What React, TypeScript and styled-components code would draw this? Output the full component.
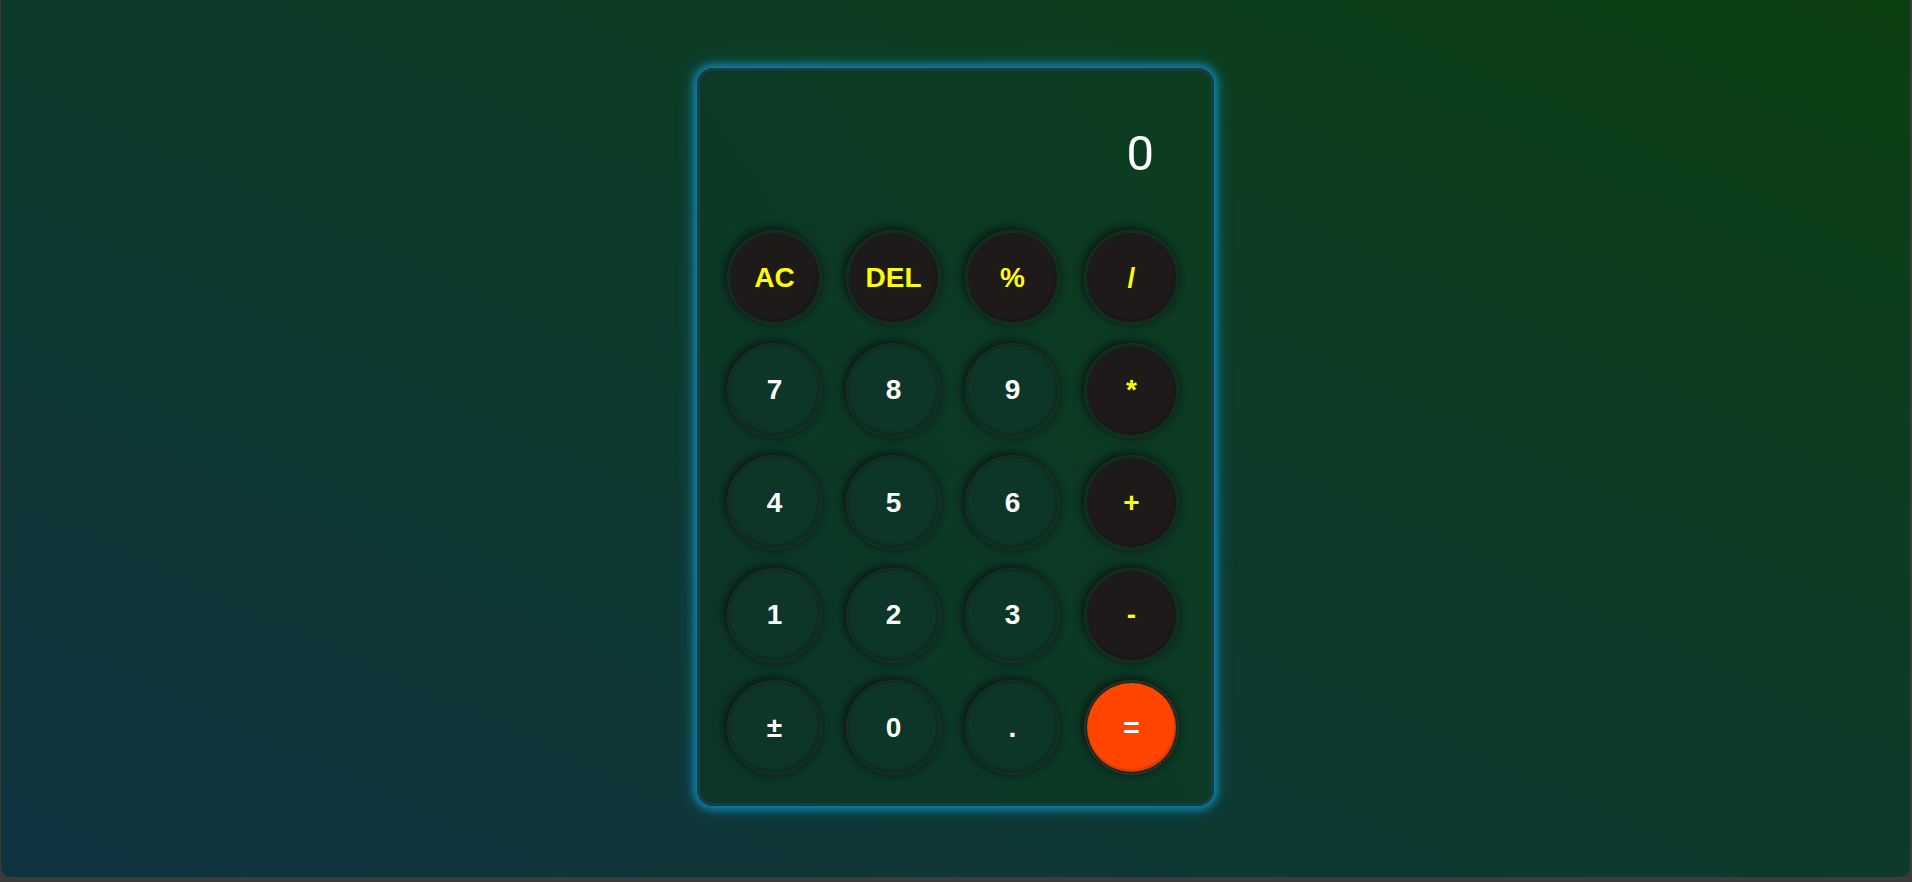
import React from "react";
import styled, { createGlobalStyle } from "styled-components";

const Global = createGlobalStyle`
  html, body { margin: 0; padding: 0; }
  body {
    background: #3b3b3b;
    font-family: "Liberation Sans", Arial, sans-serif;
  }
  * { box-sizing: border-box; }
`;

const Page = styled.div`
  margin: 0 2px 0 1px;
  height: 877px;
  padding-bottom: 3px;
  border-radius: 0 0 9px 9px;
  background: linear-gradient(to top right, #0f3441 0%, #0d3a2c 50%, #0b4012 100%);
  display: flex;
  align-items: center;
  justify-content: center;
  overflow: hidden;
`;

const Card = styled.div`
  width: 517px;
  height: 738px;
  border: 3px solid #183c48;
  border-radius: 16px;
  background: linear-gradient(to top right, #0d352a 0%, #0c3a25 50%, #0c3d1f 100%);
  box-shadow: 0 0 8px 3px #1189ae, 0 0 16px 4px rgba(14, 120, 160, 0.45);
  padding: 28px 32px 28px 27px;
  display: flex;
  flex-direction: column;
`;

const Display = styled.div`
  height: 131px;
  padding: 31px 25px 0 0;
  text-align: right;
  font-family: Roboto, "Liberation Sans", sans-serif;
  font-weight: 400;
  font-size: 49px;
  line-height: 48px;
  color: #ffffff;
`;

const Keys = styled.div`
  display: grid;
  grid-template-columns: repeat(4, 95px);
  grid-auto-rows: 95px;
  column-gap: 24px;
  row-gap: 17.5px;
`;

type Kind = "fn" | "num" | "eq";

const fills: Record<Kind, string> = {
  fn: "#1e1a19",
  num: "#0d3528",
  eq: "#ff4500",
};

const Key = styled.button<{ $kind: Kind; $yellow?: boolean }>`
  width: 95px;
  height: 95px;
  border-radius: 50%;
  border: 1px solid #2e2b2a;
  padding: 0;
  background: ${(p) => fills[p.$kind]};
  box-shadow: inset 0 0 0 2px #0c2f23, inset -1px -2px 1px 3px rgba(0, 0, 0, 0.12),
    -3px -3px 10px rgba(0, 0, 0, 0.5), 2px 2px 6px rgba(0, 0, 0, 0.2);
  color: ${(p) => (p.$yellow ? "#ffff00" : "#ffffff")};
  font-family: "Liberation Sans", Arial, sans-serif;
  font-weight: 700;
  font-size: 28px;
  display: flex;
  align-items: center;
  justify-content: center;
  cursor: pointer;
`;

const keys: { label: string; kind: Kind; yellow?: boolean }[] = [
  { label: "AC", kind: "fn", yellow: true },
  { label: "DEL", kind: "fn", yellow: true },
  { label: "%", kind: "fn", yellow: true },
  { label: "/", kind: "fn", yellow: true },
  { label: "7", kind: "num" },
  { label: "8", kind: "num" },
  { label: "9", kind: "num" },
  { label: "*", kind: "fn", yellow: true },
  { label: "4", kind: "num" },
  { label: "5", kind: "num" },
  { label: "6", kind: "num" },
  { label: "+", kind: "fn", yellow: true },
  { label: "1", kind: "num" },
  { label: "2", kind: "num" },
  { label: "3", kind: "num" },
  { label: "-", kind: "fn", yellow: true },
  { label: "±", kind: "num" },
  { label: "0", kind: "num" },
  { label: ".", kind: "num" },
  { label: "=", kind: "eq" },
];

export default function App() {
  return (
    <>
      <Global />
      <Page>
        <Card>
          <Display>0</Display>
          <Keys>
            {keys.map((k) => (
              <Key key={k.label} $kind={k.kind} $yellow={k.yellow}>
                {k.label}
              </Key>
            ))}
          </Keys>
        </Card>
      </Page>
    </>
  );
}
